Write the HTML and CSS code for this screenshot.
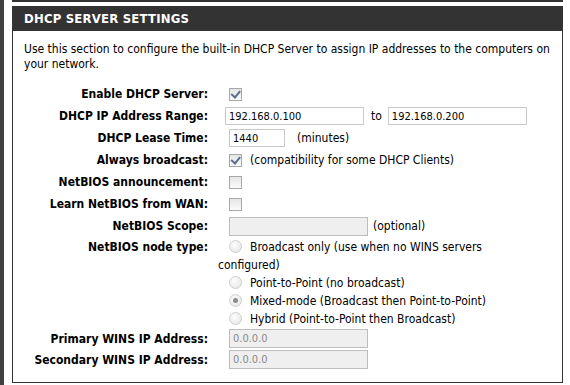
FILE: index.html
```html
<!DOCTYPE html>
<html lang="en">
<head>
  <meta charset="UTF-8">
  <title>DHCP Server Settings</title>
  <link rel="stylesheet" href="styles.css">
</head>
<body>
  <div class="page">
    <div class="side"></div>
    <div class="main">
      <div class="prev"></div>
      <div class="box">
        <h2>DHCP SERVER SETTINGS</h2>
        <div class="body">
          <p class="desc">Use this section to configure the built-in DHCP Server to assign IP addresses to the computers on your network.</p>

          <div class="row">
            <div class="label">Enable DHCP Server:</div>
            <div class="value"><span class="check on"></span></div>
          </div>
          <div class="row">
            <div class="label">DHCP IP Address Range:</div>
            <div class="value">
              <input class="txt ip" type="text" value="192.168.0.100">
              <span class="to">to</span>
              <input class="txt ip end" type="text" value="192.168.0.200">
            </div>
          </div>
          <div class="row">
            <div class="label">DHCP Lease Time:</div>
            <div class="value">
              <input class="txt lease" type="text" value="1440">
              <span class="note">(minutes)</span>
            </div>
          </div>
          <div class="row">
            <div class="label">Always broadcast:</div>
            <div class="value"><span class="check on"></span><span class="note">(compatibility for some DHCP Clients)</span></div>
          </div>
          <div class="row">
            <div class="label">NetBIOS announcement:</div>
            <div class="value"><span class="check"></span></div>
          </div>
          <div class="row">
            <div class="label">Learn NetBIOS from WAN:</div>
            <div class="value"><span class="check"></span></div>
          </div>
          <div class="row">
            <div class="label">NetBIOS Scope:</div>
            <div class="value">
              <input class="txt wide off" type="text" value="" disabled>
              <span class="opt">(optional)</span>
            </div>
          </div>
          <div class="row node">
            <div class="label">NetBIOS node type:</div>
            <div class="value radios">
              <div class="radio-line first"><span class="radio"></span>Broadcast only (use when no WINS servers<br>configured)</div>
              <div class="radio-line"><span class="radio"></span>Point-to-Point (no broadcast)</div>
              <div class="radio-line"><span class="radio on"></span>Mixed-mode (Broadcast then Point-to-Point)</div>
              <div class="radio-line"><span class="radio"></span>Hybrid (Point-to-Point then Broadcast)</div>
            </div>
          </div>
          <div class="row wins">
            <div class="label">Primary WINS IP Address:</div>
            <div class="value"><input class="txt wide off" type="text" value="0.0.0.0" disabled></div>
          </div>
          <div class="row wins">
            <div class="label">Secondary WINS IP Address:</div>
            <div class="value"><input class="txt wide off" type="text" value="0.0.0.0" disabled></div>
          </div>
        </div>
      </div>
    </div>
  </div>
</body>
</html>
```

FILE: styles.css
```css
body {
  margin: 0;
  background: #fff;
  font-family: "DejaVu Sans Condensed", "DejaVu Sans", sans-serif;
  font-stretch: condensed;
  font-size: 12px;
  color: #000;
}
.page {
  display: flex;
  height: 385px;
}
.side {
  width: 4px;
  background: #404040;
}
.main {
  margin-left: 8px;
  width: 551px;
}
.prev {
  height: 2px;
  background: #333;
  margin-bottom: 4px;
}
.box {
  border: 1px solid #333;
  border-top: none;
}
.box h2 {
  margin: 0;
  background: #333;
  color: #fff;
  font-size: 13px;
  font-weight: bold;
  font-stretch: normal;
  height: 25px;
  line-height: 26px;
  padding-left: 11px;
  letter-spacing: 0.2px;
}
.body {
  padding: 11px 0 12px 0;
}
.desc {
  margin: 0 0 11px 11px;
  line-height: 15px;
}
.row {
  display: flex;
  align-items: center;
  min-height: 22px;
}
.label {
  width: 195px;
  flex: none;
  text-align: right;
  font-weight: bold;
}
.value {
  margin-left: 10px;
  display: flex;
  align-items: center;
}
.check {
  width: 11px;
  height: 11px;
  border: 1px solid #a8a8a8;
  background: linear-gradient(#e6e6e6, #fafafa);
  margin-left: 11px;
  margin-right: 4px;
  position: relative;
}
.check.on::after {
  content: "";
  position: absolute;
  left: 2px;
  top: 0px;
  width: 4px;
  height: 7px;
  border-right: 2px solid #5b6d90;
  border-bottom: 2px solid #5b6d90;
  transform: rotate(40deg);
  transform-origin: 60% 60%;
}
.txt {
  box-sizing: border-box;
  height: 18px;
  border: 1px solid #c9c9c9;
  padding: 0 3px;
  font-family: inherit;
  font-stretch: condensed;
  font-size: 11px;
  background: #fff;
  color: #000;
  outline: none;
}
.ip {
  width: 139px;
  margin-left: 7px;
}
.ip.end {
  margin-left: 0;
}
.to {
  margin: 0 6px 0 7px;
}
.lease {
  width: 56px;
  margin-left: 11px;
}
.note {
  margin-left: 12px;
}
.check + .note {
  margin-left: 4px;
}
.wide {
  width: 139px;
  height: 19px;
  margin-left: 11px;
}
.off {
  background: #efefef;
  border-color: #bdbdbd;
  color: #8a8a8a;
}
.opt {
  margin-left: 5px;
}
.node {
  align-items: flex-start;
  padding-top: 1px;
}
.node .label {
  line-height: 18px;
}
.radios {
  display: block;
}
.radio-line {
  line-height: 18px;
  padding-left: 11px;
}
.radio-line.first {
  padding-left: 0;
  text-indent: 11px;
}
.radio {
  display: inline-block;
  width: 11px;
  height: 11px;
  border: 1px solid #cfcfcf;
  border-radius: 50%;
  background: radial-gradient(circle at 40% 35%, #fdfdfd, #e2e2e2);
  vertical-align: -2px;
  margin-right: 8px;
  text-indent: 0;
  position: relative;
}
.radio.on::after {
  content: "";
  position: absolute;
  left: 3px;
  top: 3px;
  width: 5px;
  height: 5px;
  border-radius: 50%;
  background: #8c8c8c;
}
.wins {
  min-height: 21px;
}
```
